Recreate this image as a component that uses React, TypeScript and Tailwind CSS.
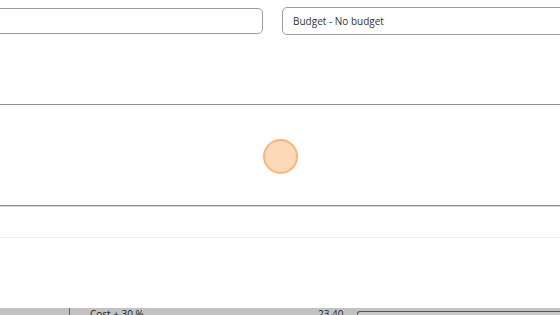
export default function App() {
  return (
    <div
      className="relative h-[315px] w-[560px] overflow-hidden bg-white text-[#333]"
      style={{ fontFamily: '"Open Sans", "DejaVu Sans", sans-serif' }}
    >
      {/* Filter inputs */}
      <div className="flex h-[104px] items-start gap-[19px] pt-[8px]">
        <div className="-ml-[20px] h-[26px] w-[283px] shrink-0 rounded-[5px] border border-[#9c9c9c] bg-white" />
        <div className="flex h-[28px] w-[300px] shrink-0 items-center rounded-[5px] border border-[#9c9c9c] bg-white px-[10px] text-[10px] -mt-[1px]">
          Budget - No budget
        </div>
      </div>

      {/* Loading area */}
      <div className="flex h-[102px] items-center justify-center border-y border-[#8f8f8f]">
        <div className="h-[35px] w-[35px] rounded-full border-2 border-[#fbb47c] bg-[#fdd8b9] mb-[-2px]" />
      </div>
      <div className="h-[32px] border-t border-[#d9d9d9] border-b-[#efefef]" style={{ borderBottomWidth: 1, borderBottomColor: "#efefef", borderTopColor: "#d4d4d4" }} />

      <div className="h-[70px]" />

      {/* Table strip */}
      <div className="flex h-[12px] items-start bg-[#c2c2c2] text-[10px] leading-[12px] text-[#222]">
        <div className="w-[70px] border-r border-[#666] h-full" />
        <div className="w-[248px] pl-[20px]">Cost + 30 %</div>
        <div className="w-[20px] text-right">23.40</div>
        <div className="ml-[19px] mt-[3px] h-[10px] flex-1 rounded-tl-[3px] border-l border-t border-[#555] bg-[#c8c8c8]" />
      </div>
    </div>
  );
}
